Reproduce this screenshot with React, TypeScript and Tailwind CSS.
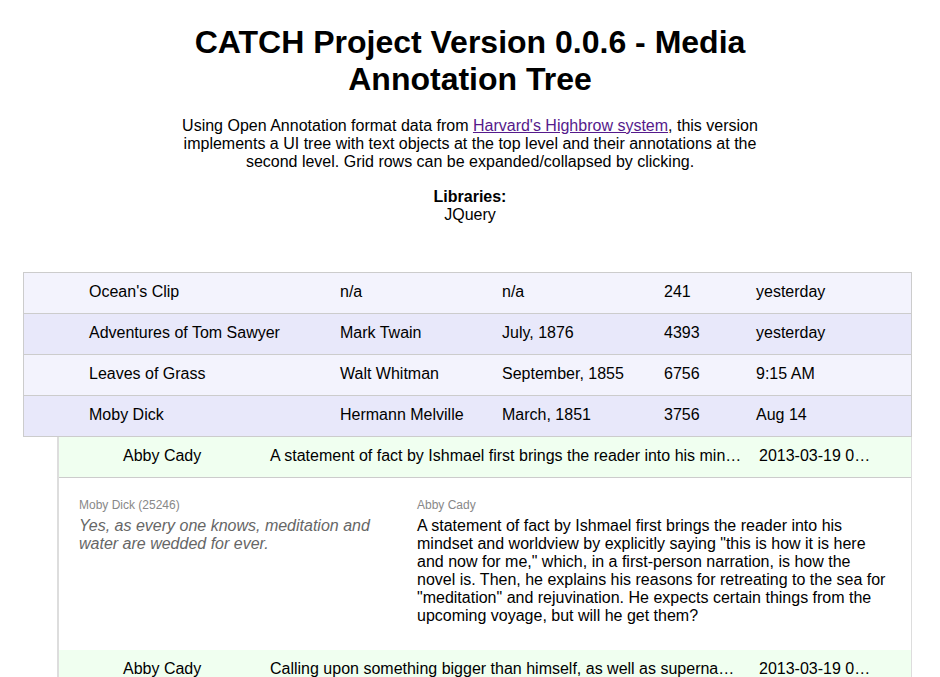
import React from "react";

const rows = [
  ["Ocean's Clip", "n/a", "n/a", "241", "yesterday"],
  ["Adventures of Tom Sawyer", "Mark Twain", "July, 1876", "4393", "yesterday"],
  ["Leaves of Grass", "Walt Whitman", "September, 1855", "6756", "9:15 AM"],
  ["Moby Dick", "Hermann Melville", "March, 1851", "3756", "Aug 14"],
];

function TopRow({ r, i }: { r: string[]; i: number }) {
  return (
    <div
      className={`flex items-center pb-[1px] ${i % 2 === 0 ? "bg-[#f3f3fd]" : "bg-[#e8e8fa]"} ${i > 0 ? "h-[41px] border-t border-[#cccccc]" : "h-[40px]"}`}
    >
      <div className="w-[65px] shrink-0" />
      <div className="w-[251px] shrink-0">{r[0]}</div>
      <div className="w-[162px] shrink-0">{r[1]}</div>
      <div className="w-[162px] shrink-0">{r[2]}</div>
      <div className="w-[92px] shrink-0">{r[3]}</div>
      <div>{r[4]}</div>
    </div>
  );
}

function ChildRow({ name, text, date }: { name: string; text: string; date: string }) {
  return (
    <div className="flex h-[40px] items-center bg-[#f0fff0] pb-[1px] whitespace-nowrap">
      <div className="w-[64px] shrink-0" />
      <div className="w-[147px] shrink-0">{name}</div>
      <div className="w-[489px] shrink-0">{text}</div>
      <div>{date}</div>
    </div>
  );
}

export default function App() {
  return (
    <div
      className="min-h-[677px] bg-white text-black text-[16px]"
      style={{ fontFamily: '"Liberation Sans", Arial, Helvetica, sans-serif' }}
    >
      <h1 className="pt-[24px] text-center text-[32px] font-bold leading-[36.8px]">
        CATCH Project Version 0.0.6 - Media
        <br />
        Annotation Tree
      </h1>
      <p className="mx-auto mt-[19px] w-[600px] text-center leading-[18.4px]">
        Using Open Annotation format data from{" "}
        <a href="#" className="text-[#551a8b] underline">
          Harvard's Highbrow system
        </a>
        , this version implements a UI tree with text objects at the top level and their
        annotations at the second level. Grid rows can be expanded/collapsed by clicking.
      </p>
      <div className="mt-[16px] text-center leading-[18.4px]">
        <div className="font-bold">Libraries:</div>
        <div>JQuery</div>
      </div>

      <div className="ml-[23px] mt-[47px] w-[889px]">
        <div className="border border-[#cccccc]">
          {rows.map((r, i) => (
            <TopRow key={i} r={r} i={i} />
          ))}
        </div>
        <div className="ml-[34px] border-l-2 border-r border-l-[#dddddd] border-r-[#dddddd]">
          <div className="border-b border-[#cccccc]">
            <ChildRow
              name="Abby Cady"
              text="A statement of fact by Ishmael first brings the reader into his min…"
              date="2013-03-19 0…"
            />
          </div>
          <div className="flex h-[172px] bg-white pl-[20px] pt-[20px]">
            <div className="w-[318px] shrink-0">
              <div className="text-[12px] leading-[14px] text-[#888888]">Moby Dick (25246)</div>
              <div className="mt-[5px] w-[300px] italic leading-[18px] text-[#666666]">
                Yes, as every one knows, meditation and water are wedded for ever.
              </div>
            </div>
            <div className="ml-[20px] w-[470px]">
              <div className="text-[12px] leading-[14px] text-[#888888]">Abby Cady</div>
              <div className="mt-[5px] leading-[18px]">
                A statement of fact by Ishmael first brings the reader into his mindset and
                worldview by explicitly saying "this is how it is here and now for me," which,
                in a first-person narration, is how the novel is. Then, he explains his reasons
                for retreating to the sea for "meditation" and rejuvination. He expects certain
                things from the upcoming voyage, but will he get them?
              </div>
            </div>
          </div>
          <ChildRow
            name="Abby Cady"
            text="Calling upon something bigger than himself, as well as superna…"
            date="2013-03-19 0…"
          />
        </div>
      </div>
    </div>
  );
}
